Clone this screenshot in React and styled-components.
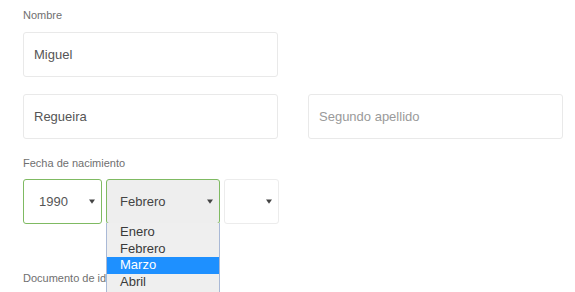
import React from "react";
import styled, { createGlobalStyle } from "styled-components";

const Global = createGlobalStyle`
  html, body {
    margin: 0;
    padding: 0;
    background: #ffffff;
    overflow: hidden;
  }
  body {
    font-family: "Liberation Sans", Arial, sans-serif;
  }
`;

const Form = styled.div`
  box-sizing: border-box;
  width: 575px;
  padding: 8px 12px 0 23px;
`;

const FieldGroup = styled.div`
  margin-top: ${(p) => p.$top || 0}px;
`;

const Label = styled.div`
  font-size: 11px;
  line-height: 15px;
  color: #6f6f6f;
  margin-bottom: ${(p) => (p.$gap !== undefined ? p.$gap : 9)}px;
  white-space: nowrap;
`;

const Row = styled.div`
  display: grid;
  grid-template-columns: 255px 255px;
  column-gap: 30px;
  margin-top: ${(p) => p.$top || 0}px;
`;

const TextInput = styled.input`
  box-sizing: border-box;
  width: ${(p) => p.$width || 255}px;
  height: 45px;
  margin: 0;
  padding: 0 10px;
  border: 1px solid #e9e9e9;
  border-radius: 3px;
  background: #fff;
  font-family: "Liberation Sans", Arial, sans-serif;
  font-size: 13px;
  color: #555;
  outline: none;
  &::placeholder {
    color: #9a9a9a;
  }
`;

const DateRow = styled.div`
  display: flex;
  gap: 4px;
`;

const SelectBox = styled.div`
  position: relative;
  box-sizing: border-box;
  width: ${(p) => p.$width}px;
  height: 45px;
  display: flex;
  align-items: center;
  justify-content: space-between;
  padding: 0 6px 0 ${(p) => p.$padLeft || 12}px;
  border: 1px solid ${(p) => (p.$valid ? "#7fba62" : "#ececec")};
  border-radius: 3px;
  background: ${(p) => (p.$open ? "#eeeeee" : "#ffffff")};
  font-size: 13px;
  color: ${(p) => (p.$open ? "#444" : "#555")};
`;

const Value = styled.span`
  white-space: nowrap;
`;

const Arrow = styled.svg`
  width: 6px;
  height: 5px;
  flex: none;
`;

const Dropdown = styled.ul`
  position: absolute;
  top: 100%;
  left: -1px;
  right: -1px;
  height: 72px;
  overflow: hidden;
  box-sizing: border-box;
  margin: 0;
  padding: 1px 0 0;
  list-style: none;
  background: #efefef;
  border: 1px solid #a9b9d6;
  border-top: none;
  z-index: 2;
`;

const Option = styled.li`
  height: 16.6px;
  line-height: 16.6px;
  padding-left: 13px;
  font-size: 13px;
  white-space: nowrap;
  color: ${(p) => (p.$selected ? "#ffffff" : "#3a3a3a")};
  background: ${(p) => (p.$selected ? "#1e90ff" : "transparent")};
`;

const Caret = () => (
  <Arrow viewBox="0 0 6 5">
    <path d="M0 0.5 L6 0.5 L3 4.8 Z" fill="#444" />
  </Arrow>
);

const months = ["Enero", "Febrero", "Marzo", "Abril"];

export default function App() {
  return (
    <>
      <Global />
      <Form>
        <FieldGroup>
          <Label>Nombre</Label>
          <TextInput defaultValue="Miguel" readOnly />
        </FieldGroup>
        <Row $top={17}>
          <TextInput defaultValue="Regueira" readOnly />
          <TextInput placeholder="Segundo apellido" readOnly />
        </Row>
        <FieldGroup $top={17}>
          <Label $gap={8}>Fecha de nacimiento</Label>
          <DateRow>
            <SelectBox $width={79} $padLeft={15} $valid>
              <Value>1990</Value>
              <Caret />
            </SelectBox>
            <SelectBox $width={114} $padLeft={13} $valid $open>
              <Value>Febrero</Value>
              <Caret />
              <Dropdown>
                {months.map((m) => (
                  <Option key={m} $selected={m === "Marzo"}>
                    {m}
                  </Option>
                ))}
              </Dropdown>
            </SelectBox>
            <SelectBox $width={55} $padLeft={12}>
              <Value />
              <Caret />
            </SelectBox>
          </DateRow>
        </FieldGroup>
        <FieldGroup $top={47}>
          <Label>Documento de identidad</Label>
        </FieldGroup>
      </Form>
    </>
  );
}
